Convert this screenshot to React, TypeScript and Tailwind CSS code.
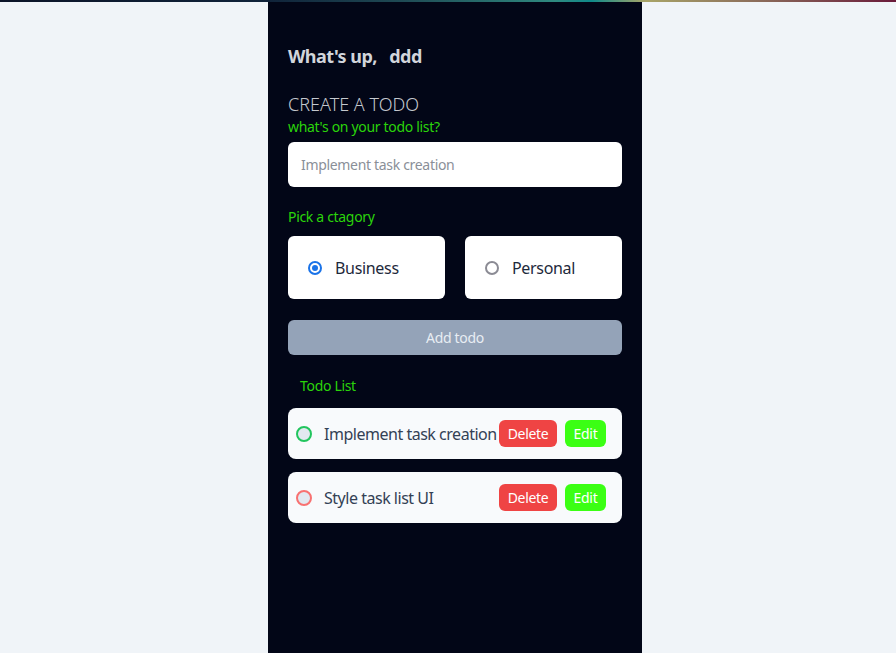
import React from "react";

export default function App() {
  return (
    <div className="min-h-[653px] w-full bg-[#f0f4f8] flex flex-col tracking-[-0.02em]" style={{ fontFamily: '"Noto Sans", "Open Sans", sans-serif' }}>
      <div className="h-[2px] w-full bg-[linear-gradient(90deg,#0b1428_0%,#10233a_30%,#1f4b55_45%,#2f8a80_62%,#0f8a8a_66%,#a8a468_72%,#8a6a5a_85%,#6a1a3a_100%)]" />
      <div className="flex flex-1">
        <div className="ml-[268px] w-[374px] min-h-[651px] bg-[#020617] px-5 pt-[42px]">
          <h1 className="text-[18px] font-bold text-[#d1d5db] leading-[24px] tracking-[-0.03em]">
            What's up,&nbsp;&nbsp; ddd
          </h1>
          <h2 className="mt-[24px] text-[18px] text-[#c4c8ce] leading-[24px] font-light tracking-normal">CREATE A TODO</h2>
          <p className="mt-[1px] text-[14px] text-[#2ad40a] leading-[20px]">what's on your todo list?</p>
          <div className="mt-[5px] h-[45px] bg-white rounded-md flex items-center px-[13px] text-[14px] text-[#8a8f98]">
            Implement task creation
          </div>
          <p className="mt-[20px] text-[14px] text-[#2ad40a] leading-[20px]">Pick a ctagory</p>
          <div className="mt-[9px] grid grid-cols-2 gap-5">
            <label className="h-[63px] bg-white rounded-md flex items-center pl-[20px] gap-[13px]">
              <span className="w-[14px] h-[14px] rounded-full border-2 border-[#1a73e8] flex items-center justify-center">
                <span className="w-[6px] h-[6px] rounded-full bg-[#1a73e8]" />
              </span>
              <span className="text-[16px] text-[#1e293b]">Business</span>
            </label>
            <label className="h-[63px] bg-white rounded-md flex items-center pl-[20px] gap-[13px]">
              <span className="w-[14px] h-[14px] rounded-full border-2 border-[#8b8b94]" />
              <span className="text-[16px] text-[#1e293b]">Personal</span>
            </label>
          </div>
          <button className="mt-[21px] w-full h-[35px] rounded-md bg-[#94a3b8] text-[14px] text-[#e8edf3]">Add todo</button>
          <p className="mt-[21px] pl-3 text-[14px] text-[#2ad40a] leading-[20px]">Todo List</p>
          <div className="mt-[12px] flex flex-col gap-[13px]">
            {[
              { t: "Implement task creation", c: "border-[#22c55e]" },
              { t: "Style task list UI", c: "border-[#f87171]" },
            ].map((it) => (
              <div key={it.t} className="h-[51px] bg-[#f8fafc] rounded-lg flex items-center pl-2 pr-4">
                <span className={`w-4 h-4 rounded-full border-2 ${it.c} bg-[#e2e8f0] shrink-0`} />
                <span className="ml-3 text-[16px] text-[#334155] flex-1 min-w-0 whitespace-nowrap tracking-[-0.03em]">{it.t}</span>
                <button className="shrink-0 w-[58px] h-[27px] rounded-md bg-[#ef4444] text-white text-[14px]">Delete</button>
                <button className="shrink-0 ml-2 w-[41px] h-[27px] rounded-md bg-[#3bff14] text-white text-[14px]">Edit</button>
              </div>
            ))}
          </div>
        </div>
      </div>
    </div>
  );
}
